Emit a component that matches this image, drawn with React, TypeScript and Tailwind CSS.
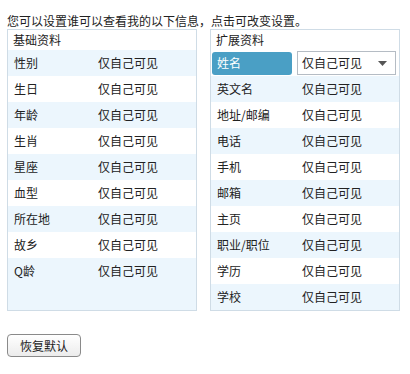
import React from 'react';

const basic = ['性别', '生日', '年龄', '生肖', '星座', '血型', '所在地', '故乡', 'Q龄'];
const extended = ['英文名', '地址/邮编', '电话', '手机', '邮箱', '主页', '职业/职位', '学历', '学校'];

const font = 'font-["Noto_Sans_CJK_SC","Noto_Sans",sans-serif]';

export default function App() {
    return (
        <div className={`w-[410px] h-[374px] bg-white px-[7px] pt-[12px] text-[12px] text-[#222] ${font}`}>
            <p className="leading-[17px] whitespace-nowrap">您可以设置谁可以查看我的以下信息，点击可改变设置。</p>

            <div className="flex gap-[13px]">
                {/* basic info */}
                <div className="w-[190px] h-[282px] border border-[#cfdce6] bg-[#ecf6fd] flex flex-col">
                    <div className="h-[20px] bg-white flex items-center px-[5px] leading-none">基础资料</div>
                    {basic.map((label, i) => (
                        <div key={label} className={`h-[26px] flex items-center pl-[6px] leading-none ${i % 2 === 0 ? 'bg-[#ecf6fd]' : 'bg-white'}`}>
                            <span className="w-[84px]">{label}</span>
                            <span>仅自己可见</span>
                        </div>
                    ))}
                </div>

                {/* extended info */}
                <div className="w-[190px] h-[282px] border border-[#cfdce6] bg-[#ecf6fd] flex flex-col">
                    <div className="h-[20px] bg-white flex items-center px-[5px] leading-none">扩展资料</div>
                    <div className="h-[26px] bg-white flex items-center pl-[1px] leading-none">
                        <span className="w-[80px] h-[23px] rounded-[3px] bg-[#4a9fc5] text-white flex items-center pl-[5px]">姓名</span>
                        <div className="ml-[5px] w-[99px] h-[24px] border border-[#b5bcc4] bg-white flex items-center pl-[4px] pr-[8px]">
                            <span className="flex-1">仅自己可见</span>
                            <svg width="9" height="5" viewBox="0 0 9 5"><path d="M0 0h9L4.5 5z" fill="#555" /></svg>
                        </div>
                    </div>
                    {extended.map((label, i) => (
                        <div key={label} className={`h-[26px] flex items-center pl-[6px] leading-none ${i % 2 === 0 ? 'bg-[#ecf6fd]' : 'bg-white'}`}>
                            <span className="w-[85px]">{label}</span>
                            <span>仅自己可见</span>
                        </div>
                    ))}
                </div>
            </div>

            <button className="mt-[23px] w-[74px] h-[23px] rounded-[4px] border border-[#8a8a8a] bg-gradient-to-b from-white to-[#ececec] text-[12px] text-[#222] leading-none">
                恢复默认
            </button>
        </div>
    );
}
